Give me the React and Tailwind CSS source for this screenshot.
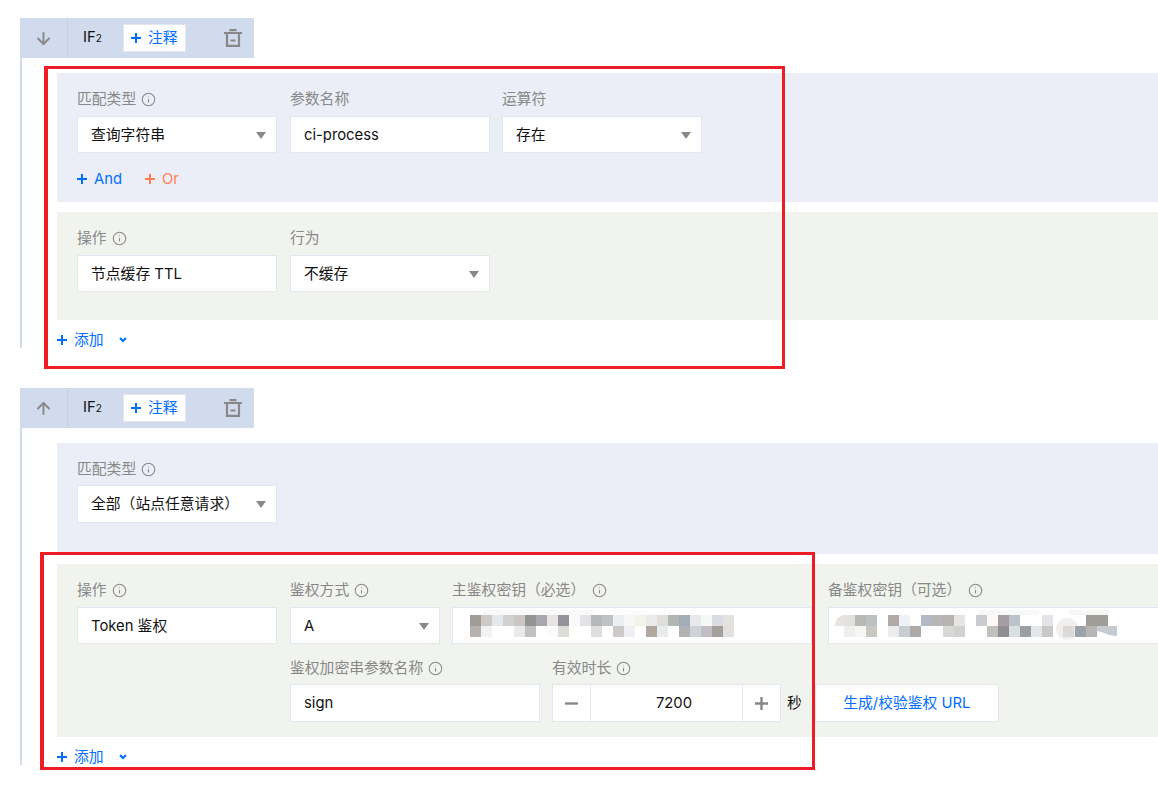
import React from "react";
import { ArrowDown, ArrowUp, Info } from "lucide-react";

// pixelated secrets, one 11px cell per colour, null = nothing drawn
const mainKey = [
  ["#a09c98", "#ccc9c7", "#e4e8ec", "#d2d1d1", "#ccc7c5", "#939393", "#a6a8ad", "#e8e5e3", "#929497", "#fafafa", "#e2e3e6", "#b5b7b9", "#bcc2c6", "#eceef1", "#f7f7f5", "#f3f3ea", "#eaeaec", "#e0dedb", "#b1b7b3", "#a2adb8", "#e9e9eb", "#f6f8f7", "#dbdce1", "#e3e2df"],
  ["#b7b2ae", "#f0f2f5", null, null, "#ebeaeb", "#c1c1c1", null, "#fbfbfb", "#dfdbd7", null, null, "#dedede", null, "#cdc9c8", "#eef0f3", null, "#b0a89f", "#e9ecef", null, "#b2b2b3", "#ced3da", "#c1bfc3", "#a3a09e", "#e2e1df"],
];

const backupKey = [
  ["#e3e1e0", "#b8b8b4", "#bcc2c2", null, "#b0a9a8", "#eff1f4", null, "#b3b9c5", "#b9b6b8", "#b7b3b1", "#e5e5e5", null, "#c8ccd0", "#fcf8f5", "#a59da1", "#bcc3ca", null, null, "#e2e4e8", null, null, null, "#9e9d98", "#9e9d98"],
  ["#efefef", "#f6f6f3", "#c8c7c2", null, "#ebecef", "#c8cdd2", "#aeaaa7", null, null, "#d9d8d5", "#d1d1d1", null, null, "#c0c1bc", "#8f8f94", "#d8e1e2", "#9d9ea0", "#e3e7ea", "#c8c8c8", null, null, "#9aa3a8", "#b6b6b4"],
];

const Mosaic = ({ rows, startX, faint, children }) => (
  <svg className="block w-full h-full" aria-hidden="true">
    {faint.map(([x, w, c]) => (
      <rect key={x} x={x} y={2} width={w} height={5} fill={c} />
    ))}
    {children}
    {rows.map((row, r) =>
      row.map((c, i) =>
        c ? <rect key={`${r}-${i}`} x={startX + i * 11} y={7 + r * 11} width={11} height={11} fill={c} /> : null
      )
    )}
  </svg>
);

const PlusIcon = ({ size = 10, width = 2 }) => (
  <svg width={size} height={size} viewBox={`0 0 ${size} ${size}`} className="shrink-0" aria-hidden="true">
    <path d={`M0 ${size / 2}h${size}M${size / 2} 0v${size}`} stroke="currentColor" strokeWidth={width} fill="none" />
  </svg>
);

const Label = ({ text, info, className = "gap-[5px]" }) => (
  <div className={`h-5 flex items-center text-[#888] whitespace-nowrap ${className}`}>
    <span>{text}</span>
    {info && <Info size={15} strokeWidth={1.7} className="shrink-0 text-[#888]" />}
  </div>
);

const Box = ({ className = "", children }) => (
  <div className={`h-[37px] pt-px bg-white border border-[#e3e6ef] flex items-center pl-[13px] text-[#111] whitespace-nowrap ${className}`}>
    {children}
  </div>
);

const Select = ({ value, className = "w-[200px]" }) => (
  <Box className={`justify-between pr-[10px] ${className}`}>
    <span>{value}</span>
    <svg width="10" height="7" viewBox="0 0 10 7" aria-hidden="true">
      <path d="M0 0h10L5 7z" fill="#888" />
    </svg>
  </Box>
);

const Field = ({ label, info, children, className = "", labelClass = "gap-[5px] mb-[7px]" }) => (
  <div className={`shrink-0 ${className}`}>
    <Label text={label} info={info} className={labelClass} />
    {children}
  </div>
);

const TrashIcon = () => (
  <svg width="18" height="18" viewBox="0 0 18 18" fill="none" stroke="#888" strokeWidth="2.2" aria-hidden="true">
    <path d="M0 4h18M5.5 1.1h7M3 4v12.9h12V4M6.5 11.5h5" />
  </svg>
);

const Header = ({ up }) => (
  <div className="ml-5 w-[234px] h-10 bg-[#d0dbed] flex items-center">
    <div className="w-[48px] h-full border-r border-[#c3d0e3] flex items-center justify-center">
      {up ? <ArrowUp size={19} strokeWidth={2.4} className="text-[#888]" /> : <ArrowDown size={19} strokeWidth={2.4} className="text-[#888]" />}
    </div>
    <div className="w-[55px] pl-[15px] text-[#111] -mt-[2px]">
      IF<span className="text-[10px]">2</span>
    </div>
    <div className="w-[63px] h-[28px] bg-white border border-[#e3e6ef] flex items-center pl-[7px] gap-[7px] text-[#006eff]">
      <PlusIcon />
      <span>注释</span>
    </div>
    <div className="ml-[38px]">
      <TrashIcon />
    </div>
  </div>
);

const AddRow = () => (
  <div className="mt-[10px] h-5 flex items-center text-[#006eff]">
    <PlusIcon />
    <span className="ml-[7px]">添加</span>
    <svg width="8" height="6" viewBox="0 0 8 6" className="ml-[15px]" aria-hidden="true">
      <path d="M1 1l3 3 3-3" fill="none" stroke="currentColor" strokeWidth="2" />
    </svg>
  </div>
);

export default function App() {
  return (
    <div className="relative h-[788px] w-full overflow-hidden bg-white pt-[18px] text-[14.8px] font-['Inter','Noto_Sans_CJK_SC',sans-serif]">
      {/* first rule */}
      <Header />
      <div className="ml-5 h-[290px] border-l-2 border-[#d0dbed] pl-[35px] pt-[15px]">
        <div className="h-[129px] bg-[#ebeef6] pt-4 pl-5">
          <div className="flex">
            <Field label="匹配类型" info className="w-[200px] mr-[13px]">
              <Select value="查询字符串" />
            </Field>
            <Field label="参数名称" className="w-[200px] mr-3">
              <Box>ci-process</Box>
            </Field>
            <Field label="运算符" className="w-[200px]">
              <Select value="存在" />
            </Field>
          </div>
          <div className="mt-4 h-5 flex items-center">
            <span className="flex items-center gap-[7px] text-[#006eff]">
              <PlusIcon />
              And
            </span>
            <span className="ml-[23px] flex items-center gap-[7px] text-[#ff7f50]">
              <PlusIcon />
              Or
            </span>
          </div>
        </div>
        <div className="mt-[10px] h-[108px] bg-[#f1f3ee] pt-4 pl-5 flex">
          <Field label="操作" info className="w-[200px] mr-[13px]">
            <Box>节点缓存 TTL</Box>
          </Field>
          <Field label="行为" className="w-[200px]">
            <Select value="不缓存" />
          </Field>
        </div>
        <AddRow />
      </div>

      {/* second rule */}
      <div className="mt-10">
        <Header up />
      </div>
      <div className="ml-5 h-[337px] border-l-2 border-[#d0dbed] pl-[35px] pt-[15px]">
        <div className="h-[111px] bg-[#ebeef6] pt-4 pl-5">
          <Field label="匹配类型" info className="w-[200px]" labelClass="gap-[5px] mb-[6px]">
            <Select value="全部（站点任意请求）" className="w-[200px] h-[38px]" />
          </Field>
        </div>
        <div className="mt-[10px] h-[173px] bg-[#f1f3ee] pt-4 pl-5 flex">
          <Field label="操作" info className="w-[200px] mr-[13px]">
            <Box>Token 鉴权</Box>
          </Field>
          <div>
            <div className="flex">
              <Field label="鉴权方式" info className="w-[150px] mr-3">
                <Select value="A" className="w-[150px]" />
              </Field>
              <Field label="主鉴权密钥（必选）" info className="w-[360px] mr-4" labelClass="gap-[7px] mb-[7px]">
                <div className="h-[37px] bg-white border border-[#e3e6ef]">
                  <Mosaic rows={mainKey} startX={17} faint={[[30, 110, "#f8faf9"], [160, 60, "#fbfcfb"]]} />
                </div>
              </Field>
              <Field label="备鉴权密钥（可选）" info className="w-[360px]" labelClass="gap-[7px] mb-[7px]">
                <div className="h-[37px] bg-white border border-[#e3e6ef]">
                  <Mosaic rows={backupKey} startX={15} faint={[[150, 60, "#f7f9f7"], [240, 40, "#f6f8f5"]]}>
                    <path d="M6 18c0-6 4-11 9-11v11z" fill="#e7e3e0" />
                    <circle cx="238" cy="21" r="11" fill="#f0efee" />
                    <rect x="234" y="18" width="11" height="11" fill="#dcdad8" />
                    <path d="M266 23c8 0 12 5 22 5V18h-22z" fill="#c5cbd0" />
                  </Mosaic>
                </div>
              </Field>
            </div>
            <div className="mt-[14px] flex">
              <Field label="鉴权加密串参数名称" info className="w-[250px] mr-3" labelClass="gap-[5px] mb-[6px]">
                <Box className="w-[250px] h-[38px]">sign</Box>
              </Field>
              <Field label="有效时长" info labelClass="gap-[5px] mb-[6px]">
                <div className="flex items-center">
                  <div className="w-[229px] h-[38px] bg-white border border-[#e3e6ef] flex items-center text-[#111]">
                    <div className="w-[38px] h-full flex items-center justify-center border-r border-[#e3e6ef] text-[#888]">
                      <svg width="13" height="3" viewBox="0 0 13 3" aria-hidden="true">
                        <path d="M0 1.5h13" stroke="currentColor" strokeWidth="2.4" />
                      </svg>
                    </div>
                    <div className="flex-1 text-center pl-[15px]">7200</div>
                    <div className="w-[38px] h-full flex items-center justify-center border-l border-[#e3e6ef] text-[#888]">
                      <PlusIcon size={13} width={2.4} />
                    </div>
                  </div>
                  <span className="ml-[6px] text-[#111]">秒</span>
                  <div className="ml-[13px] w-[184px] h-[38px] bg-white border border-[#e3e6ef] flex items-center justify-center text-[#006eff] whitespace-nowrap">
                    生成/校验鉴权 URL
                  </div>
                </div>
              </Field>
            </div>
          </div>
        </div>
        <AddRow />
      </div>

      {/* red annotation boxes drawn on top of the screenshot */}
      <div className="absolute left-[44px] top-[66px] w-[741px] h-[303px] border-[3px] border-l-4 border-[#ee1c25]" />
      <div className="absolute left-[40px] top-[552px] w-[775px] h-[218px] border-[3px] border-l-4 border-[#ee1c25]" />
    </div>
  );
}
